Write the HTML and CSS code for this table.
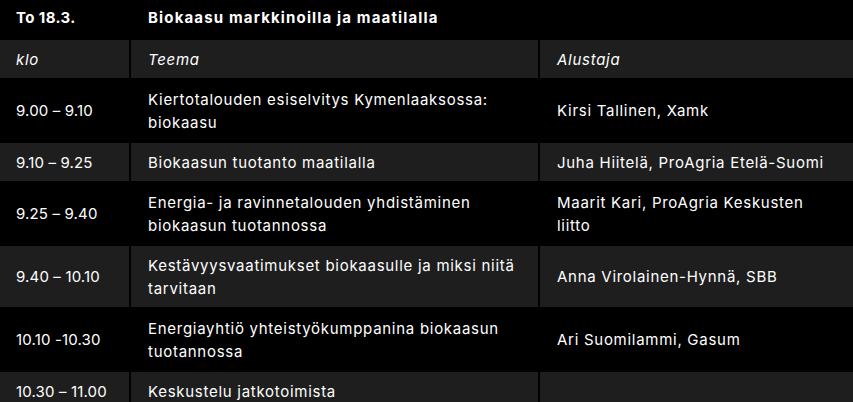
FILE: index.html
```html
<!DOCTYPE html>
<html lang="fi">
<head>
<meta charset="utf-8">
<title>Ohjelma</title>
<link rel="stylesheet" href="styles.css">
</head>
<body>
<table class="schedule">
  <colgroup>
    <col class="c-time">
    <col class="c-topic">
    <col class="c-speaker">
  </colgroup>
  <tr class="title-row">
    <td class="time">To 18.3.</td>
    <td>Biokaasu markkinoilla ja maatilalla</td>
    <td></td>
  </tr>
  <tr class="head-row alt">
    <td>klo</td>
    <td>Teema</td>
    <td>Alustaja</td>
  </tr>
  <tr>
    <td class="time">9.00 – 9.10</td>
    <td>Kiertotalouden esiselvitys Kymenlaaksossa: biokaasu</td>
    <td>Kirsi Tallinen, Xamk</td>
  </tr>
  <tr class="alt">
    <td class="time">9.10 – 9.25</td>
    <td>Biokaasun tuotanto maatilalla</td>
    <td>Juha Hiitelä, ProAgria Etelä-Suomi</td>
  </tr>
  <tr>
    <td class="time">9.25 – 9.40</td>
    <td>Energia- ja ravinnetalouden yhdistäminen biokaasun tuotannossa</td>
    <td>Maarit Kari, ProAgria Keskusten liitto</td>
  </tr>
  <tr class="alt">
    <td class="time">9.40 – 10.10</td>
    <td>Kestävyysvaatimukset biokaasulle ja miksi niitä tarvitaan</td>
    <td>Anna Virolainen-Hynnä, SBB</td>
  </tr>
  <tr>
    <td class="time">10.10 -10.30</td>
    <td>Energiayhtiö yhteistyökumppanina biokaasun tuotannossa</td>
    <td>Ari Suomilammi, Gasum</td>
  </tr>
  <tr class="alt">
    <td class="time">10.30 – 11.00</td>
    <td>Keskustelu jatkotoimista</td>
    <td></td>
  </tr>
</table>
</body>
</html>
```

FILE: styles.css
```css
html, body {
  margin: 0;
  padding: 0;
  background: #000;
  overflow: hidden;
}

body {
  font-family: "Inter", "DejaVu Sans", sans-serif;
  font-size: 15px;
  line-height: 23px;
  letter-spacing: 0.72px;
  color: #fff;
}

.schedule {
  table-layout: fixed;
  border-collapse: separate;
  border-spacing: 2px;
  margin: -2px 0 0 -2px;
  width: 859px;
}

.c-time { width: 129px; }
.c-topic { width: 407px; }
.c-speaker { width: 315px; }

.schedule td {
  padding: 7.5px 16px 7.5px 16px;
  vertical-align: middle;
  background: #000;
}

.schedule td + td {
  padding-left: 17px;
}

.schedule .alt td {
  background: #1e1e1e;
}

.schedule td.time {
  white-space: nowrap;
  letter-spacing: 0.15px;
}

.title-row td {
  font-weight: 700;
  letter-spacing: 1.15px;
  padding-top: 6px;
  padding-bottom: 9px;
}

.title-row td.time {
  letter-spacing: 0.4px;
}

.head-row td {
  font-style: italic;
}
```
